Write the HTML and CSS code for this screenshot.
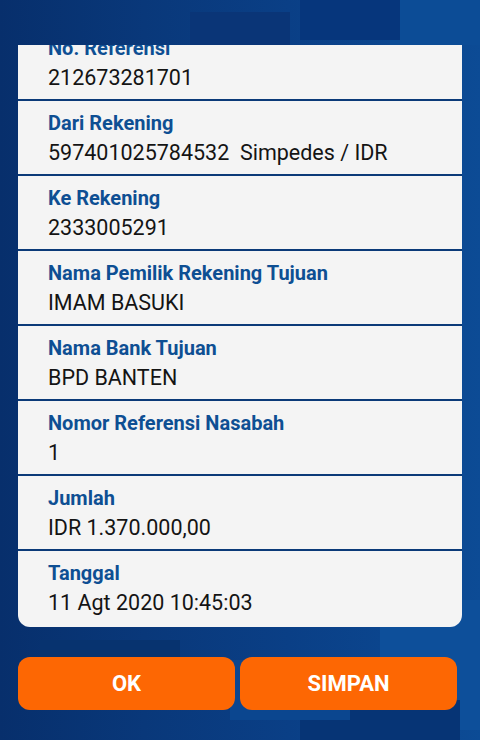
FILE: index.html
```html
<!DOCTYPE html>
<html>
<head>
  <title>Bukti Transfer</title>
  <link rel="stylesheet" href="styles.css">
</head>
<body>

<div class="screen">
  <div class="card">
    <div class="list">
      <div class="row">
        <div class="label">No. Referensi</div>
        <div class="value">212673281701</div>
      </div>
      <div class="row">
        <div class="label">Dari Rekening</div>
        <div class="value">597401025784532&nbsp; Simpedes / IDR</div>
      </div>
      <div class="row">
        <div class="label">Ke Rekening</div>
        <div class="value">2333005291</div>
      </div>
      <div class="row">
        <div class="label">Nama Pemilik Rekening Tujuan</div>
        <div class="value">IMAM BASUKI</div>
      </div>
      <div class="row">
        <div class="label">Nama Bank Tujuan</div>
        <div class="value">BPD BANTEN</div>
      </div>
      <div class="row">
        <div class="label">Nomor Referensi Nasabah</div>
        <div class="value">1</div>
      </div>
      <div class="row">
        <div class="label">Jumlah</div>
        <div class="value">IDR 1.370.000,00</div>
      </div>
      <div class="row last">
        <div class="label">Tanggal</div>
        <div class="value">11 Agt 2020 10:45:03</div>
      </div>
    </div>
  </div>

  <div class="actions">
    <button class="btn">OK</button>
    <button class="btn">SIMPAN</button>
  </div>
</div>

</body>
</html>
```

FILE: styles.css
```css
html, body {
  height: 100%;
}

body {
  margin: 0;
  font-family: Roboto, 'Noto Sans', sans-serif;
  background-color: #083f88;
  background-image:
    linear-gradient(#0a3577, #0a3577),
    linear-gradient(#06367c, #06367c),
    linear-gradient(#0c4c96, #0c4c96),
    linear-gradient(#07336f, #07336f),
    linear-gradient(#0b468f, #0b468f),
    linear-gradient(#063475, #063475),
    linear-gradient(#0d4f9a, #0d4f9a),
    linear-gradient(90deg, #072f6c 0%, #09387a 30%, #0a3f86 60%, #0c4b95 100%);
  background-size:
    100px 40px,
    100px 40px,
    90px 45px,
    140px 70px,
    120px 60px,
    160px 80px,
    110px 130px,
    100% 100%;
  background-position:
    190px 12px,
    300px 0,
    390px 0,
    40px 640px,
    230px 660px,
    300px 700px,
    380px 600px,
    0 0;
  background-repeat: no-repeat;
}

.screen {
  padding: 45px 18px 0;
}

.card {
  background-color: #f4f4f4;
  border-radius: 0 0 12px 12px;
  height: 582px;
  overflow: hidden;
}

.list {
  margin-top: -19px;
}

.row {
  padding: 11px 30px 7px;
  border-bottom: 2px solid #0b3a78;
}

.row.last {
  border-bottom: none;
}

.label {
  font-size: 20px;
  line-height: 22px;
  font-weight: 700;
  color: #0e4f93;
  margin-bottom: 5px;
}

.value {
  font-size: 21.5px;
  line-height: 28px;
  color: #141414;
}

.actions {
  display: flex;
  gap: 5px;
  margin-top: 30px;
  padding-right: 5px;
}

.btn {
  flex: 1;
  height: 53px;
  border: none;
  border-radius: 12px;
  background-color: #fd6703;
  color: #fff;
  font-family: Roboto, sans-serif;
  font-size: 22px;
  font-weight: 700;
  cursor: pointer;
}
```
